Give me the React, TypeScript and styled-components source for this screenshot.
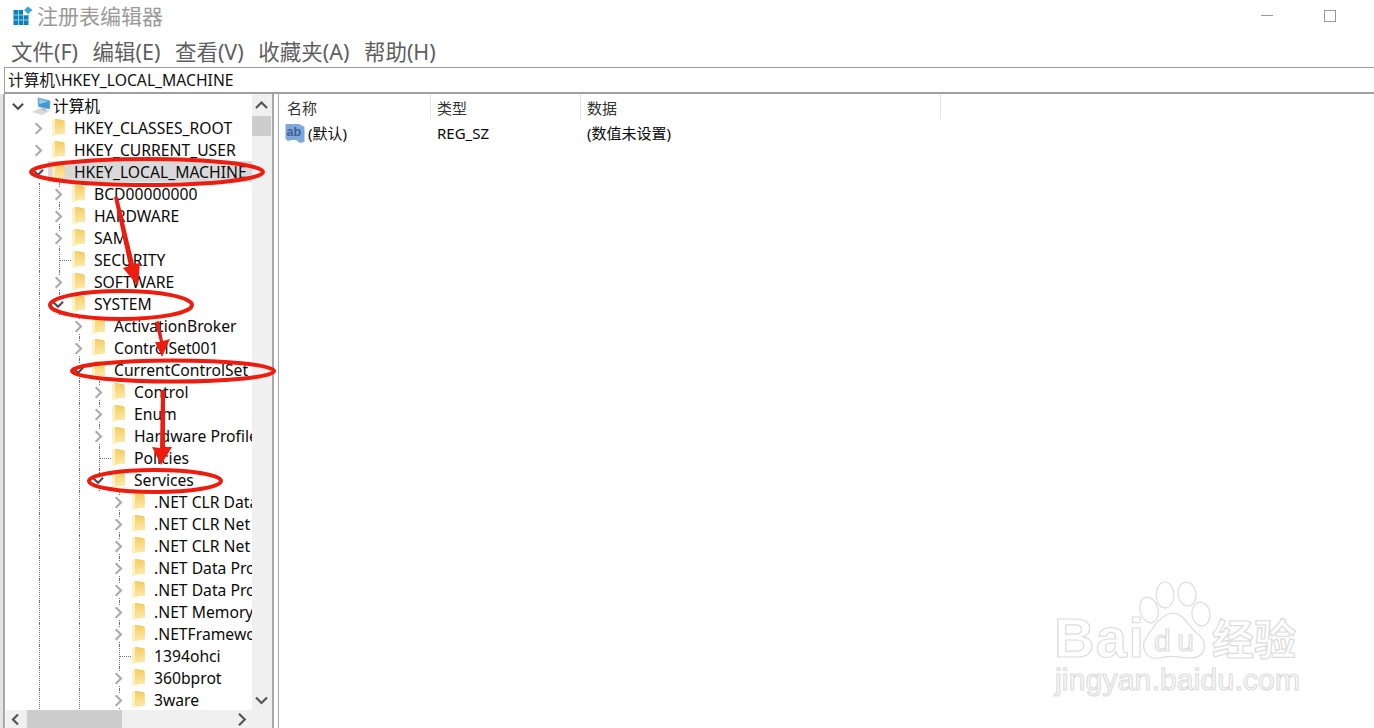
import React from "react";
import styled, { createGlobalStyle } from "styled-components";

const Global = createGlobalStyle`
  html, body { margin: 0; padding: 0; background: #fff; overflow: hidden; }
  body { font-family: "Noto Sans", "Noto Sans CJK SC", sans-serif; }
`;

const Page = styled.div`
  position: relative;
  width: 1374px;
  height: 728px;
  display: flex;
  flex-direction: column;
  overflow: hidden;
  background: #fff;
`;
const TitleBar = styled.div`
  height: 33px;
  display: flex;
  align-items: center;
  padding: 0 38px 2px 13px;
  box-sizing: border-box;
  gap: 4px;
`;
const Title = styled.div`
  flex: 1;
  font-size: 21px;
  line-height: 31px;
  color: #9a9a9a;
  font-family: "Noto Sans CJK SC", sans-serif;
`;
const WinButtons = styled.div`
  display: flex;
  align-items: center;
  gap: 51px;
`;
const Minimize = styled.div`
  width: 12px;
  height: 1px;
  background: #9a9a9a;
`;
const Maximize = styled.div`
  width: 10px;
  height: 10px;
  border: 1px solid #9a9a9a;
`;
const MenuBar = styled.div`
  height: 34px;
  display: flex;
  align-items: center;
  gap: 14.5px;
  padding: 3px 0 0 11px;
  box-sizing: border-box;
`;
const MenuItem = styled.div`
  font-size: 21.5px;
  color: #5e5e5e;
  line-height: 30px;
`;
const Address = styled.div`
  height: 27px;
  box-sizing: border-box;
  border-top: 1px solid #a0a0a0;
  border-bottom: 2px solid #a0a0a0;
  margin-left: 4px;
  padding-left: 3px;
  border-left: 1px solid #a0a0a0;
  font-size: 15.7px;
  line-height: 24px;
  color: #111;
`;
const Main = styled.div`
  flex: 1;
  min-height: 0;
  display: flex;
  background: #fff;
`;
const LeftEdge = styled.div`
  width: 5px;
  flex: none;
  background: linear-gradient(to right, #e4e4e4 0 3px, #a8a8a8 3px 5px);
`;
const TreePane = styled.div`
  width: 267px;
  flex: none;
  display: grid;
  grid-template-columns: 247px 20px;
  grid-template-rows: 1fr 18px;
  min-height: 0;
`;
const Tree = styled.div`
  overflow: hidden;
  padding-top: 1px;
  min-height: 0;
`;
const Row = styled.div<{ $depth: number }>`
  position: relative;
  height: 22px;
  display: flex;
  align-items: stretch;
  padding-left: ${(p) => 7 + p.$depth * 20}px;
  font-size: 15.7px;
  line-height: 22px;
  color: #0a0a0a;
  white-space: nowrap;
`;
const Guide = styled.span<{ $x: number }>`
  position: absolute;
  left: ${(p) => p.$x - 5}px;
  top: 0;
  bottom: 0;
  border-left: 1px dotted #707070;
`;
const Toggle = styled.span<{ $leaf?: boolean }>`
  position: relative;
  z-index: 1;
  width: 12px;
  flex: none;
  display: flex;
  align-items: center;
  justify-content: center;
  &::after {
    content: "";
    display: ${(p) => (p.$leaf ? "block" : "none")};
    position: absolute;
    left: 7px;
    right: -7px;
    top: 11px;
    border-top: 1px dotted #707070;
  }
`;
const ChevronBox = styled.svg`
  background: #fff;
  display: block;
`;
const RowBody = styled.span<{ $selected?: boolean }>`
  flex: 1;
  position: relative;
  z-index: 1;
  display: flex;
  align-items: center;
  margin-left: 4px;
  padding-left: 4px;
  height: 21px;
  background: ${(p) => (p.$selected ? "#d9d9d9" : "transparent")};
`;
const RootBody = styled(RowBody)`
  margin-left: 8px;
  padding-left: 0;
  gap: 2px;
`;
const FolderLabel = styled.span`
  margin-left: 9px;
`;
const VScroll = styled.div`
  grid-row: 1 / 3;
  grid-column: 2;
  background: #f0f0f0;
  display: flex;
  flex-direction: column;
  align-items: center;
  padding-right: 1px;
`;
const VButton = styled.div`
  height: 22px;
  flex: none;
  display: flex;
  align-items: center;
  justify-content: center;
`;
const VThumb = styled.div`
  width: 100%;
  height: 20px;
  background: #cdcdcd;
  flex: none;
`;
const VSpace = styled.div`
  flex: 1;
`;
const VCorner = styled.div`
  height: 17px;
  flex: none;
`;
const HScroll = styled.div`
  grid-column: 1;
  grid-row: 2;
  background: #f0f0f0;
  display: flex;
  align-items: center;
  margin-left: 1px;
`;
const HButton = styled.div`
  width: 21px;
  flex: none;
  display: flex;
  align-items: center;
  justify-content: center;
`;
const HThumb = styled.div`
  width: 95px;
  height: 100%;
  background: #cdcdcd;
  flex: none;
`;
const HSpace = styled.div`
  flex: 1;
`;
const Splitter = styled.div`
  width: 7px;
  flex: none;
  box-sizing: border-box;
  border-left: 2px solid #a8a8a8;
  border-right: 1px solid #a8a8a8;
  background: #fff;
`;
const ListPane = styled.div`
  flex: 1;
  min-width: 0;
  font-size: 15px;
  color: #0a0a0a;
`;
const ListHeader = styled.div`
  display: flex;
  height: 26px;
  color: #333;
`;
const HeaderCell = styled.div<{ $w: number }>`
  width: ${(p) => p.$w}px;
  box-sizing: border-box;
  padding-left: 6px;
  line-height: 29px;
  border-right: 1px solid #e3e3e3;
  margin-bottom: 1px;
  &:first-child {
    padding-left: 8px;
  }
`;
const ListRow = styled.div`
  display: flex;
  height: 26px;
  line-height: 26px;
`;
const NameCell = styled.div`
  width: 152px;
  padding-left: 6px;
  box-sizing: border-box;
  display: flex;
  align-items: center;
  gap: 3px;
  flex: none;
`;
const ValueCell = styled.div<{ $w: number }>`
  width: ${(p) => p.$w}px;
  box-sizing: border-box;
  padding-left: 6px;
  flex: none;
`;
const Overlay = styled.svg`
  position: absolute;
  left: 0;
  top: 0;
  z-index: 5;
  pointer-events: none;
`;
const WatermarkText = styled.text`
  fill: #fff;
  stroke: #dcdcdc;
  stroke-width: 1.2px;
`;

const Chevron = ({ open, dir }: { open?: boolean; dir?: "l" | "r" | "u" | "d" }) => {
  const d = dir ?? (open ? "d" : "r");
  const pts = {
    r: "4,0.8 9.8,6.5 4,12.2",
    l: "8,1.5 3,6.5 8,11.5",
    d: "1,3.5 6.5,9 12,3.5",
    u: "1,9 6.5,3.5 12,9",
  }[d];
  const color = dir ? "#555" : open ? "#4a4a4a" : "#a8a8a8";
  return (
    <ChevronBox width={13} height={13} viewBox="0 0 13 13" style={dir ? { background: "transparent" } : undefined}>
      <polyline points={pts} fill="none" stroke={color} strokeWidth={2.2} />
    </ChevronBox>
  );
};

const Folder = () => (
  <svg width={13} height={19} viewBox="0 0 13 19" style={{ flex: "none" }}>
    <defs>
      <linearGradient id="fg" x1="0" y1="0" x2="0" y2="1">
        <stop offset="0" stopColor="#f5cf68" />
        <stop offset="1" stopColor="#fde9a6" />
      </linearGradient>
    </defs>
    <path d="M3 1 L11 2 L12.5 3 L12.5 15.5 L3 15.5 Z" fill="#f3c95c" />
    <path d="M0.5 2 L7 1 L7 16 L0.5 18 Z" fill="url(#fg)" />
    <path d="M7 3 H12.5 V15.5 H7 Z" fill="url(#fg)" />
    <path d="M0.5 2 L3 1.6 L3 17.3 L0.5 18 Z" fill="#fff1c6" />
  </svg>
);

const PcIcon = () => (
  <svg width={19} height={18} viewBox="0 0 19 18" style={{ flex: "none" }}>
    <path d="M0 15 L8 11 L18 14 L10 18 Z" fill="#d8d8d8" />
    <path d="M6 1 L18 4 L17.5 12 L6.5 9.5 Z" fill="#3d9ad8" stroke="#7f9fb5" strokeWidth={0.8} />
    <path d="M7 2 L16 4.4 L7.3 7 Z" fill="#8fd0f2" />
    <path d="M10 11 L14 12 L14 14 L10 13 Z" fill="#a9b8c4" />
  </svg>
);

const AbIcon = () => (
  <svg width={20} height={21} viewBox="0 0 20 21" style={{ flex: "none" }}>
    <path d="M0.5 1 H14 L19.5 4 V19 L15 20 L11 17 H6 L3 18 L0.5 16 Z" fill="#7ca9d9" />
    <text x={1.5} y={13} fontSize={12.5} fontWeight={700} fontFamily='"Liberation Sans", sans-serif' fill="#3f5f9a">
      ab
    </text>
  </svg>
);

const AppIcon = () => (
  <svg width={20} height={20} viewBox="0 0 20 20" style={{ flex: "none" }}>
    <rect x={0.5} y={4} width={15} height={15} fill="#0f7fb8" />
    <g stroke="#8fd0ec" strokeWidth={1}>
      <path d="M5.5 4 V19 M10.5 4 V19 M0.5 9 H15.5 M0.5 14 H15.5" />
    </g>
    <rect x={10} y={4} width={5.5} height={5} fill="#fff" />
    <path d="M15 0.5 L19.5 4 L15 8 L11 4 Z" fill="#38a7d8" />
  </svg>
);

type Item = { d: number; t: string; s?: "open" | "closed" | "leaf"; sel?: boolean };
const items: Item[] = [
  { d: 1, t: "HKEY_CLASSES_ROOT" },
  { d: 1, t: "HKEY_CURRENT_USER" },
  { d: 1, t: "HKEY_LOCAL_MACHINE", s: "open", sel: true },
  { d: 2, t: "BCD00000000" },
  { d: 2, t: "HARDWARE" },
  { d: 2, t: "SAM" },
  { d: 2, t: "SECURITY", s: "leaf" },
  { d: 2, t: "SOFTWARE" },
  { d: 2, t: "SYSTEM", s: "open" },
  { d: 3, t: "ActivationBroker" },
  { d: 3, t: "ControlSet001" },
  { d: 3, t: "CurrentControlSet", s: "open" },
  { d: 4, t: "Control" },
  { d: 4, t: "Enum" },
  { d: 4, t: "Hardware Profile" },
  { d: 4, t: "Policies", s: "leaf" },
  { d: 4, t: "Services", s: "open" },
  { d: 5, t: ".NET CLR Data" },
  { d: 5, t: ".NET CLR Net" },
  { d: 5, t: ".NET CLR Net " },
  { d: 5, t: ".NET Data Pro" },
  { d: 5, t: ".NET Data Pro " },
  { d: 5, t: ".NET Memory" },
  { d: 5, t: ".NETFramewo" },
  { d: 5, t: "1394ohci", s: "leaf" },
  { d: 5, t: "360bprot" },
  { d: 5, t: "3ware" },
];

const guidesFor = (d: number): number[] => {
  if (d === 2) return [39, 59];
  if (d === 3) return [39, 79];
  if (d === 4) return [39, 79, 99];
  if (d === 5) return [39, 79, 119];
  return [];
};

const Annotations = () => (
  <Overlay width={1374} height={728} viewBox="0 0 1374 728">
    <g fill="none" stroke="#ee1c0e" strokeWidth={4}>
      <ellipse cx={147} cy={172} rx={116} ry={13} />
      <ellipse cx={121} cy={305} rx={71} ry={14} />
      <ellipse cx={173} cy={371} rx={101} ry={10.5} />
      <ellipse cx={155} cy={481} rx={66} ry={11} />
    </g>
    <g fill="#ee1c0e">
      <path d="M114 197 L118 197 L134 264 L140 263 L138 286 L123 268 L129 266 Z" />
      <path d="M155 322 L159 321 L163 341 L170 339 L162 357 L155 342 L160 342 Z" />
      <path d="M161 390 L165 390 L165 447 L172 447 L161 465 L152 447 L160 448 Z" />
    </g>
  </Overlay>
);

const Watermark = () => (
  <Overlay width={1374} height={728} viewBox="0 0 1374 728">
    <g fill="#fff" stroke="#dcdcdc" strokeWidth={1.2}>
      <ellipse cx={1149} cy={610} rx={9} ry={13} transform="rotate(-15 1149 610)" />
      <ellipse cx={1165} cy={595} rx={9} ry={13} />
      <ellipse cx={1187} cy={594} rx={9} ry={12} transform="rotate(-8 1187 594)" />
      <ellipse cx={1201} cy={614} rx={9} ry={12} transform="rotate(-8 1201 614)" />
      <path d="M1173 613 C1183 613 1188 626 1198 634 C1208 642 1207 658 1190 658 C1180 658 1172 654 1160 658 C1146 660 1140 648 1146 638 C1152 630 1160 614 1173 613 Z" />
    </g>
    <WatermarkText x={1054} y={657} fontSize={56} fontWeight={700} fontFamily='"Liberation Sans", sans-serif' textLength={90}>
      Bai
    </WatermarkText>
    <WatermarkText x={1154} y={651} fontSize={30} fontFamily='"Liberation Sans", sans-serif' textLength={40}>
      du
    </WatermarkText>
    <WatermarkText x={1212} y={655} fontSize={42} fontWeight={700} fontFamily='"Noto Sans CJK SC", sans-serif'>
      经验
    </WatermarkText>
    <WatermarkText x={1055} y={690} fontSize={30} fontFamily='"Liberation Sans", sans-serif' textLength={245}>
      jingyan.baidu.com
    </WatermarkText>
  </Overlay>
);

export default function App() {
  return (
    <Page>
      <Global />
      <TitleBar>
        <AppIcon />
        <Title>注册表编辑器</Title>
        <WinButtons>
          <Minimize />
          <Maximize />
        </WinButtons>
      </TitleBar>
      <MenuBar>
        <MenuItem>文件(F)</MenuItem>
        <MenuItem>编辑(E)</MenuItem>
        <MenuItem>查看(V)</MenuItem>
        <MenuItem>收藏夹(A)</MenuItem>
        <MenuItem>帮助(H)</MenuItem>
      </MenuBar>
      <Address>计算机\HKEY_LOCAL_MACHINE</Address>
      <Main>
        <LeftEdge />
        <TreePane>
          <Tree>
            <Row $depth={0}>
              <Toggle>
                <Chevron open />
              </Toggle>
              <RootBody>
                <PcIcon />
                <span>计算机</span>
              </RootBody>
            </Row>
            {items.map((it) => (
              <Row $depth={it.d} key={it.t}>
                {guidesFor(it.d).map((x) => (
                  <Guide $x={x} key={x} />
                ))}
                <Toggle $leaf={it.s === "leaf"}>
                  {it.s !== "leaf" && <Chevron open={it.s === "open"} />}
                </Toggle>
                <RowBody $selected={it.sel}>
                  <Folder />
                  <FolderLabel>{it.t}</FolderLabel>
                </RowBody>
              </Row>
            ))}
          </Tree>
          <VScroll>
            <VButton>
              <Chevron dir="u" />
            </VButton>
            <VThumb />
            <VSpace />
            <VButton>
              <Chevron dir="d" />
            </VButton>
            <VCorner />
          </VScroll>
          <HScroll>
            <HButton>
              <Chevron dir="l" />
            </HButton>
            <HThumb />
            <HSpace />
            <HButton>
              <Chevron dir="r" />
            </HButton>
          </HScroll>
        </TreePane>
        <Splitter />
        <ListPane>
          <ListHeader>
            <HeaderCell $w={152}>名称</HeaderCell>
            <HeaderCell $w={150}>类型</HeaderCell>
            <HeaderCell $w={360}>数据</HeaderCell>
          </ListHeader>
          <ListRow>
            <NameCell>
              <AbIcon />
              <span>(默认)</span>
            </NameCell>
            <ValueCell $w={150}>REG_SZ</ValueCell>
            <ValueCell $w={360}>(数值未设置)</ValueCell>
          </ListRow>
        </ListPane>
      </Main>
      <Annotations />
      <Watermark />
    </Page>
  );
}
